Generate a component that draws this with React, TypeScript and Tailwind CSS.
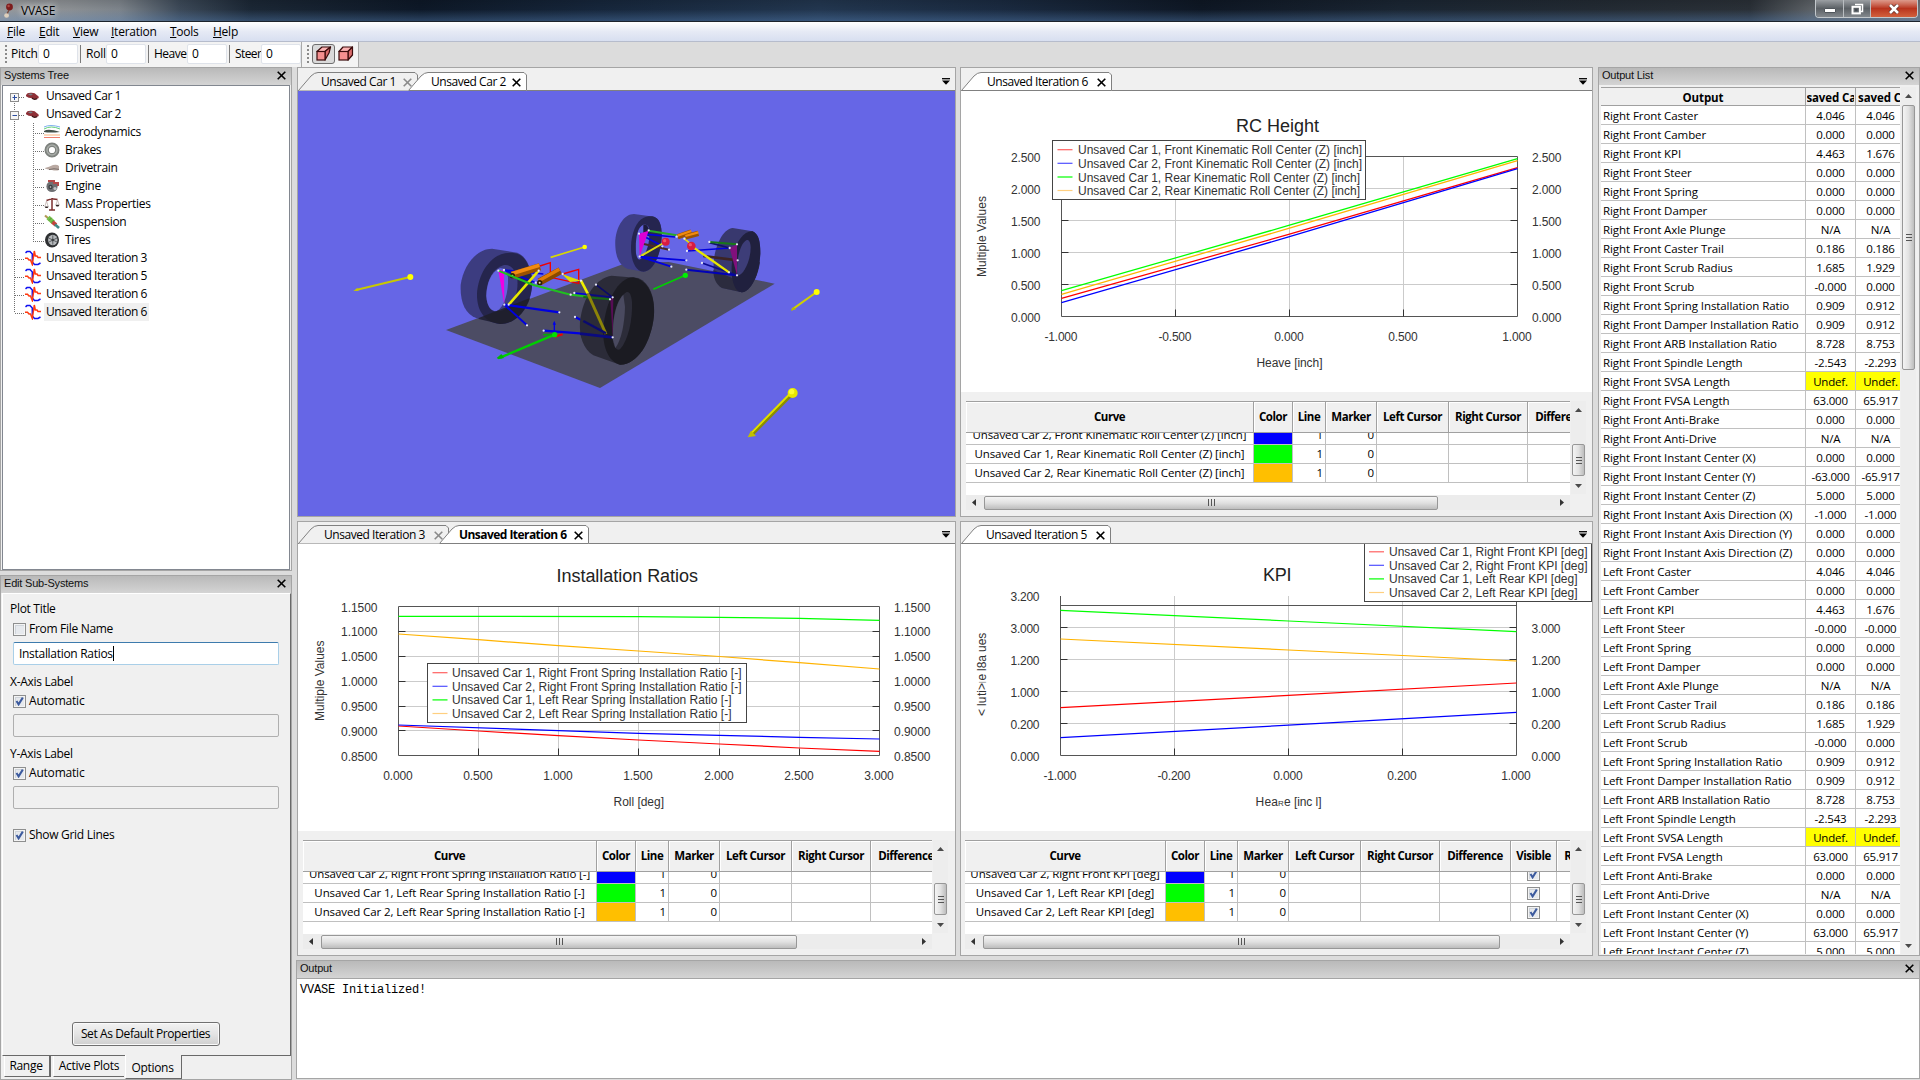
import React from "react";

const UI = "font-['Open_Sans','Noto_Sans',sans-serif] text-[11.5px] tracking-[-0.2px]";

function CloseX({ color = "#000", className = "" }: { color?: string; className?: string }) {
  return (
    <svg width="9" height="9" viewBox="0 0 9 9" className={"shrink-0 " + className}>
      <path d="M0.7 0.7 L8.3 8.3 M8.3 0.7 L0.7 8.3" stroke={color} strokeWidth="1.6" fill="none" />
    </svg>
  );
}

function Caption({ title, close = true }: { title: string; close?: boolean }) {
  return (
    <div className="flex h-[17px] shrink-0 items-center justify-between bg-gradient-to-b from-[#b9b9b9] to-[#d4d4d4] pb-[2px] pl-[3px] pr-[5px] font-['Liberation_Sans',sans-serif] text-[11px] text-[#111]">
      <span>{title}</span>
      {close && <CloseX />}
    </div>
  );
}

/* ---------- title bar, menu, toolbar ---------- */

function TitleBar() {
  return (
    <div className="flex h-[22px] shrink-0 justify-between overflow-hidden border-b border-[#1c232c] bg-[linear-gradient(180deg,rgba(0,0,0,0.12),rgba(255,255,255,0)_45%,rgba(90,135,190,0.38)),linear-gradient(90deg,#97999b_0px,#8b8f93_70px,#7c838a_120px,#3c4958_180px,#1b2735_250px,#0d1827_420px,#16263b_600px,#22364f_820px,#1a2a40_1000px,#0e1724_1200px,#1a2532_1400px,#222a33_1590px,#2a3037_1750px,#5c6166_1812px,#6b7075_1920px)]">
      <div className="flex items-center">
        <svg width="16" height="20" viewBox="0 0 16 20" className="ml-[2px]">
          <circle cx="7.5" cy="6" r="3.4" fill="#7d1c1c" />
          <circle cx="6.6" cy="5" r="1.2" fill="#b04a44" />
          <path d="M7 9 L5 13" stroke="#7b4a3c" strokeWidth="1.4" />
          <ellipse cx="4.6" cy="14.5" rx="2.4" ry="2.2" fill="#ddd0bd" />
        </svg>
        <span className="ml-[3px] font-['Open_Sans',sans-serif] text-[12px] tracking-[-0.2px] text-black [text-shadow:0_0_6px_#fff,0_0_8px_#ffffff90]">VVASE</span>
      </div>
      <div className="mr-[2px] flex h-[18px] overflow-hidden rounded-b-[4px] border border-t-0 border-[#c3c8cc]">
        <div className="flex w-[28px] items-center justify-center border-r border-[#b9bdc1] bg-gradient-to-b from-[#9b9fa3] via-[#5b6065] to-[#83888d]">
          <div className="mt-[3px] h-[5px] w-[12px] rounded-[1px] border border-[#50565c] bg-white" />
        </div>
        <div className="flex w-[27px] items-center justify-center border-r border-[#b9bdc1] bg-gradient-to-b from-[#9b9fa3] via-[#5b6065] to-[#83888d]">
          <svg width="13" height="12" viewBox="0 0 13 12">
            <path d="M4 1.5 h7.5 v7 h-2" fill="none" stroke="#fff" strokeWidth="1.5" />
            <rect x="1.5" y="3.8" width="7.4" height="6.6" fill="none" stroke="#fff" strokeWidth="2" />
            <rect x="3.9" y="6" width="2.6" height="2.2" fill="#444b52" />
          </svg>
        </div>
        <div className="flex w-[46px] items-center justify-center bg-gradient-to-b from-[#dc9a8c] via-[#b8331d] to-[#d2603c]">
          <svg width="12" height="10" viewBox="0 0 12 10">
            <path d="M2 1 L10 9 M10 1 L2 9" stroke="#5b2a24" strokeWidth="4" />
            <path d="M2 1 L10 9 M10 1 L2 9" stroke="#fff" strokeWidth="2.6" />
          </svg>
        </div>
      </div>
    </div>
  );
}

const menus = [
  { t: "File", w: "w-[32px]" },
  { t: "Edit", w: "w-[34px]" },
  { t: "View", w: "w-[38px]" },
  { t: "Iteration", w: "w-[59px]" },
  { t: "Tools", w: "w-[43px]" },
  { t: "Help", w: "w-[40px]" },
];

function MenuBar() {
  return (
    <div className="flex h-[20px] shrink-0 items-center border-b border-[#b6bccc] bg-gradient-to-b from-white via-[#e6eaf5] to-[#d8dff0] pl-[7px] text-[12px] tracking-[-0.25px]">
      {menus.map((m) => (
        <span key={m.t} className={m.w}>
          <u className="underline-offset-1">{m.t[0]}</u>
          {m.t.slice(1)}
        </span>
      ))}
    </div>
  );
}

function Grip() {
  return (
    <div className="flex w-[11px] shrink-0 flex-col items-center justify-center gap-[2px]">
      {[0, 1, 2, 3, 4].map((i) => (
        <div key={i} className="h-[2px] w-[2px] bg-[#8a8a8a]" />
      ))}
    </div>
  );
}

function Cube({ skew = false }: { skew?: boolean }) {
  return (
    <svg width="16" height="15" viewBox="0 0 16 15">
      {skew ? (
        <>
          <path d="M1 5.5 L6 1 L14.5 1 L9 5.5 Z" fill="#fbb3b3" stroke="#3a0b0b" strokeWidth="1.2" strokeLinejoin="round" />
          <path d="M9 5.5 L14.5 1 L13 7 L9 14 Z" fill="#d96b6b" stroke="#3a0b0b" strokeWidth="1.2" strokeLinejoin="round" />
        </>
      ) : (
        <>
          <path d="M1 5.5 L5 1 L14.5 1 L10 5.5 Z" fill="#fbb3b3" stroke="#3a0b0b" strokeWidth="1.2" strokeLinejoin="round" />
          <path d="M10 5.5 L14.5 1 L14.5 9 L10 14 Z" fill="#d96b6b" stroke="#3a0b0b" strokeWidth="1.2" strokeLinejoin="round" />
        </>
      )}
      <rect x="1" y="5.5" width={skew ? 8 : 9} height="8.5" fill="#f58f8f" stroke="#3a0b0b" strokeWidth="1.2" />
    </svg>
  );
}

const fields = [
  { t: "Pitch", w: "w-[27px]" },
  { t: "Roll", w: "w-[20px]" },
  { t: "Heave", w: "w-[33px] tracking-[-0.5px]" },
  { t: "Steer", w: "w-[26px] tracking-[-0.6px]" },
];

function ToolBar() {
  return (
    <div className="flex h-[25px] shrink-0 bg-[#dcdcdc]">
      <div className="flex w-[302px] items-center border-r border-[#a9a9a9] bg-[#f3f3f3] pb-[2px]">
        <Grip />
        {fields.map((f, i) => (
          <React.Fragment key={f.t}>
            {i > 0 && <div className="ml-[2px] mr-[5px] h-[18px] w-px bg-[#7a7a7a]" />}
            <span className={"shrink-0 whitespace-nowrap text-[12px] " + f.w}>{f.t}</span>
            <span className="flex h-[20px] w-[40px] shrink-0 items-center rounded-[2px] border border-[#dfe3ea] bg-white pl-[4px] text-[12px]">0</span>
          </React.Fragment>
        ))}
      </div>
      <div className="flex w-[57px] items-center border-r border-[#a9a9a9] bg-[#f3f3f3] pb-[2px]">
        <Grip />
        <div className="-ml-px flex h-[20px] w-[23px] items-center justify-center rounded-[3px] border border-[#6f6f6f] bg-[#dadada]">
          <Cube skew />
        </div>
        <div className="ml-[3px]">
          <Cube />
        </div>
      </div>
    </div>
  );
}

/* ---------- systems tree ---------- */

const icons: Record<string, React.ReactNode> = {
  car: (
    <>
      <path d="M1 7 Q2 4.6 6 4.8 Q10 4.6 12 7.2 Q14 8 13.8 10 Q11 11.8 7.5 10.2 Q3 10 1 8.2 Z" fill="#8e2f36" />
      <path d="M3 6.4 Q5 5 8 6 L6 7.6 Z" fill="#777f86" />
      <path d="M7 10 Q9 12 12 10.6" stroke="#3b1114" strokeWidth="1.4" fill="none" />
    </>
  ),
  Aerodynamics: (
    <>
      <path d="M0 3 Q6 0 16 3" stroke="#7fb0ee" fill="none" />
      <path d="M0 5 Q7 1 16 5" stroke="#63cf7c" fill="none" />
      <path d="M0 7 Q4 4 16 8 Q6 9 0 8 Z" fill="#44504a" />
      <path d="M0 11 H16" stroke="#f7b27a" />
      <path d="M0 13.5 H16" stroke="#ee7c6c" />
    </>
  ),
  Brakes: (
    <>
      <circle cx="8" cy="8" r="5.3" fill="none" stroke="#7d817d" strokeWidth="4.4" />
      <circle cx="8" cy="8" r="5" fill="none" stroke="#a8aca8" strokeWidth="1.5" />
    </>
  ),
  Drivetrain: (
    <>
      <path d="M1 8 Q5 7 9 5 Q13 4 15 6 V10 Q12 11 8 10 Q4 10 1 8.6 Z" fill="#b9a9a2" />
      <path d="M5 9.6 Q10 8 15 9.4" stroke="#7a6f6b" fill="none" />
    </>
  ),
  Engine: (
    <>
      <circle cx="8" cy="8.5" r="5.6" fill="#6e7073" />
      <path d="M4 3 H10 V5 H14 V8" stroke="#b44a4a" strokeWidth="2" fill="none" />
      <circle cx="6.5" cy="9" r="2.2" fill="#3d4043" />
      <circle cx="11" cy="10.5" r="1.6" fill="#c2c4c6" />
      <circle cx="6.5" cy="9" r="0.8" fill="#d5d5d5" />
    </>
  ),
  "Mass Properties": (
    <>
      <path d="M8 2 V13.5 M2.5 4.5 Q8 2 13.5 3.5 M5 14 H11" stroke="#7c2f2f" strokeWidth="1.5" fill="none" />
      <path d="M2.5 5 L1 10 M2.5 5 L4 10 M13.5 4 L12 8.5 M13.5 4 L15 8.5" stroke="#b7a6a2" strokeWidth="0.7" />
      <path d="M0.5 10.5 H4.8 L3.5 12 H1.6 Z M11.4 8.7 H15.6 L14.4 10.4 H12.5 Z" fill="#332424" />
    </>
  ),
  Suspension: (
    <>
      <path d="M1 1.5 L4.5 4.5" stroke="#b09a55" strokeWidth="2.2" />
      <path d="M4 3.5 L9.5 8.5" stroke="#76c24a" strokeWidth="4.4" />
      <path d="M8.5 8 L12 11" stroke="#c4433c" strokeWidth="3.8" />
      <path d="M11 10.5 L15 14" stroke="#3f8a86" strokeWidth="2.6" />
      <path d="M5 6.5 L7.6 3.8 M7.2 8.6 L9.6 6" stroke="#4d8430" strokeWidth="0.8" />
    </>
  ),
  Tires: (
    <>
      <ellipse cx="8" cy="8" rx="7" ry="7.4" fill="#2e3032" />
      <ellipse cx="8.8" cy="8" rx="4.7" ry="5.2" fill="#b5b8bb" />
      <path d="M8.8 3.4 V12.6 M4.6 6 L13 10 M4.6 10.2 L13 6" stroke="#53575a" strokeWidth="0.9" />
      <circle cx="8.8" cy="8" r="1.2" fill="#3b3e40" />
    </>
  ),
  iteration: (
    <>
      <path d="M0.5 2.8 L2 1.6 H5 L7.3 4 V12 L9.5 14.4 H13 L15.5 13" stroke="#1010f0" strokeWidth="1.5" fill="none" />
      <path d="M0 8.2 H2.5 L4 10 H5.5 L7.3 14.5 L9.3 1 L10.3 6 H12 L13 7.5 H16" stroke="#ff3a10" strokeWidth="1.5" fill="none" />
    </>
  ),
};

function Icon({ name }: { name: string }) {
  return (
    <svg width="16" height="16" viewBox="0 0 16 16" className="shrink-0">
      {icons[name]}
    </svg>
  );
}

type Node = { label: string; icon: string; depth: 0 | 1; box?: "+" | "-"; first?: boolean; last?: boolean; sel?: boolean };

const tree: Node[] = [
  { label: "Unsaved Car 1", icon: "car", depth: 0, box: "+", first: true },
  { label: "Unsaved Car 2", icon: "car", depth: 0, box: "-" },
  ...["Aerodynamics", "Brakes", "Drivetrain", "Engine", "Mass Properties", "Suspension", "Tires"].map(
    (l): Node => ({ label: l, icon: l, depth: 1, last: l === "Tires" }),
  ),
  { label: "Unsaved Iteration 3", icon: "iteration", depth: 0 },
  { label: "Unsaved Iteration 5", icon: "iteration", depth: 0 },
  { label: "Unsaved Iteration 6", icon: "iteration", depth: 0 },
  { label: "Unsaved Iteration 6", icon: "iteration", depth: 0, last: true, sel: true },
];

function TreeRow({ n }: { n: Node }) {
  const w = n.depth ? 41 : 22;
  const dash = { stroke: "#6f6f6f", strokeWidth: 1, strokeDasharray: "1 1" };
  return (
    <div className="flex h-[18px] items-center">
      <svg width={w} height="18" viewBox={`1 0 ${w} 18`} className="shrink-0">
        {n.depth === 1 ? (
          <>
            <path d="M12.5 0 V18" {...dash} />
            <path d={n.last ? "M31.5 0 V10" : "M31.5 0 V18"} {...dash} />
            <path d="M31 10.5 H42" {...dash} />
          </>
        ) : (
          <>
            <path d={n.first ? "M12.5 10 V18" : n.last ? "M12.5 0 V10" : "M12.5 0 V18"} {...dash} />
            <path d="M13 10.5 H23" {...dash} />
          </>
        )}
        {n.box && (
          <>
            <rect x="8.5" y="6.5" width="8" height="8" fill="#f6f6f6" stroke="#8c8c8c" />
            <path d={n.box === "+" ? "M10.5 10.5 H15 M12.5 8 V13" : "M10.5 10.5 H15"} stroke="#2b4da0" />
          </>
        )}
      </svg>
      <Icon name={n.icon} />
      <span
        className={
          "ml-[3px] flex h-[18px] items-center whitespace-nowrap pl-[2px] pr-[2px] text-[12px] " +
          (n.depth ? "tracking-[-0.3px] " : "tracking-[-0.45px] ") +
          (n.sel ? "bg-[#f0f0f0]" : "")
        }
      >
        {n.label}
      </span>
    </div>
  );
}

function SystemsTree() {
  return (
    <div className="flex h-[504px] flex-col border border-[#a5a5a5] bg-[#f0f0f0]">
      <Caption title="Systems Tree" />
      <div className="mx-px flex-1 border border-[#828790] bg-white pt-[1px]">
        {tree.map((n, i) => (
          <TreeRow key={i} n={n} />
        ))}
      </div>
    </div>
  );
}

/* ---------- edit panel ---------- */

function Check({ on }: { on: boolean }) {
  return (
    <span className="flex h-[13px] w-[13px] shrink-0 items-center justify-center border border-[#8e8f8f] bg-[#f4f4f4]">
      <svg width="9" height="9" viewBox="0 0 9 9">
        <rect width="9" height="9" fill="#cfd4da" />
        <rect x="1" y="1" width="8" height="8" fill="#e6e9ed" />
        {on && <path d="M1.5 4 L3.6 7.4 L7.8 0.6" stroke="#3c5a9e" strokeWidth="2" fill="none" />}
      </svg>
    </span>
  );
}

function EditPanel() {
  return (
    <div className="flex h-[505px] flex-col border border-[#a5a5a5] bg-[#f0f0f0]">
      <Caption title="Edit Sub-Systems" />
      <div className="ml-px flex flex-1 flex-col border-b border-l border-r border-t border-b-[#696969] border-l-white border-r-[#696969] border-t-white px-[7px] pt-[6px] text-[12px] tracking-[-0.3px]">
        <span className="h-[18px] leading-[18px]">Plot Title</span>
        <div className="ml-[3px] mt-[2px] flex h-[18px] items-center gap-[3px]"><Check on={false} />From File Name</div>
        <div className="ml-[3px] mt-[4px] flex h-[23px] w-[266px] items-center rounded-[2px] border border-[#a9cfe8] border-t-[#3d7bad] bg-white pl-[5px]">
          Installation Ratios<span className="h-[15px] w-px bg-black" />
        </div>
        <span className="mt-[8px] h-[18px] leading-[18px]">X-Axis Label</span>
        <div className="ml-[3px] mt-[1px] flex h-[18px] items-center gap-[3px] tracking-[-0.2px]"><Check on />Automatic</div>
        <div className="ml-[3px] mt-[4px] h-[23px] w-[266px] rounded-[2px] border border-[#afafaf]" />
        <span className="mt-[8px] h-[18px] leading-[18px]">Y-Axis Label</span>
        <div className="ml-[3px] mt-[1px] flex h-[18px] items-center gap-[3px] tracking-[-0.2px]"><Check on />Automatic</div>
        <div className="ml-[3px] mt-[4px] h-[23px] w-[266px] rounded-[2px] border border-[#afafaf]" />
        <div className="ml-[3px] mt-[17px] flex h-[18px] items-center gap-[3px]"><Check on />Show Grid Lines</div>
        <div className="mb-[9px] mr-[2px] mt-auto flex h-[24px] w-[148px] items-center justify-center self-center rounded-[3px] border border-[#707070] bg-gradient-to-b from-[#f2f2f2] via-[#e4e4e4] to-[#cfcfcf] tracking-[-0.4px] shadow-[inset_0_0_0_1px_#fafafa]">
          Set As Default Properties
        </div>
      </div>
      <div className="flex h-[23px] shrink-0 items-start pl-[3px] text-[12px] tracking-[-0.3px]">
        <div className="flex h-[21px] w-[47px] items-center justify-center border-b border-l border-r-2 border-b-[#696969] border-l-white border-r-[#696969] pr-[2px]">Range</div>
        <div className="ml-[2px] flex h-[21px] w-[71px] items-center justify-center border-b border-l border-b-[#696969] border-l-white">Active Plots</div>
        <div className="-mt-px ml-px flex h-[24px] w-[57px] items-center justify-center border-b border-l border-r border-b-[#696969] border-l-white border-r-[#696969] bg-[#f0f0f0] pr-[2px] pt-[3px]">Options</div>
      </div>
    </div>
  );
}

/* ---------- document panes ---------- */

type TabDef = { label: string; w: number; cls: string; pad: string; active?: boolean; bold?: boolean };

function TabStrip({ tabs, cls }: { tabs: TabDef[]; cls: string }) {
  return (
    <div className={"relative flex shrink-0 items-end justify-between border-b border-[#808080] bg-[#f0f0f0] " + cls}>
      <div className="flex">
        {tabs.map((t) => (
          <div key={t.label} className={"relative flex h-[18px] items-center justify-between whitespace-nowrap pr-[6px] pt-[2px] " + t.cls + " " + t.pad}>
            <svg width={t.w} height="19" viewBox={`0 0 ${t.w} 19`} className="absolute left-0 top-0">
              <path
                d={`M0.5 18.5 L13 4 Q16.5 0.5 20 0.5 H${t.w - 3} L${t.w - 0.5} 3 V18.5`}
                fill={t.active ? "#fff" : "#f0f0f0"}
                stroke="#808080"
              />
              {t.active && <path d={`M1 18.5 H${t.w - 1}`} stroke="#808080" />}
            </svg>
            <span className={"relative text-[12px] " + (t.bold ? "font-bold tracking-[-0.55px]" : "tracking-[-0.45px]")}>{t.label}</span>
            <CloseX color={t.active ? "#000" : "#8a8a8a"} className="relative" />
          </div>
        ))}
      </div>
      <svg width="8" height="7" viewBox="0 0 8 7" className="mb-[5px] mr-[5px]">
        <path d="M0 0.7 H8" stroke="#000" strokeWidth="1.3" />
        <path d="M0 2.5 H8 L4 6.8 Z" fill="#000" />
      </svg>
    </div>
  );
}

function Pane({ tabs, strip, children }: { tabs: TabDef[]; strip: string; children: React.ReactNode }) {
  return (
    <div className="flex flex-col border border-[#a5a5a5] bg-[#f0f0f0]">
      <TabStrip tabs={tabs} cls={strip} />
      {children}
    </div>
  );
}

function VBar({ cls, top, len }: { cls: string; top: string; len: string }) {
  return (
    <div className={"flex w-[15px] shrink-0 flex-col items-center bg-[#ededed] " + cls}>
      <svg width="7" height="4" viewBox="0 0 7 4" className="mt-[7px]"><path d="M0 4 L3.5 0 L7 4 Z" fill="#4a4a4a" /></svg>
      <div className={"flex w-[13px] flex-col items-center justify-center gap-[2px] rounded-[2px] border border-[#979797] bg-gradient-to-r from-[#f4f4f4] via-[#e2e2e2] to-[#bdbdbd] " + top + " " + len}>
        {[0, 1, 2].map((i) => (<div key={i} className="h-px w-[6px] bg-[#555]" />))}
      </div>
      <svg width="7" height="4" viewBox="0 0 7 4" className="mb-[6px] mt-auto"><path d="M0 0 L3.5 4 L7 0 Z" fill="#4a4a4a" /></svg>
    </div>
  );
}

function CurveGrid({ cols, clip, rows, heads, thumb, visible, indent }: {
  cols: string; clip: string; rows: string[]; heads: string[]; thumb: string; visible?: boolean; indent: string;
}) {
  const colors = ["bg-[#0000ff]", "bg-[#00ff00]", "bg-[#ffbf00]"];
  return (
    <div className={"flex pt-[9px] " + indent}>
      <div className={"flex shrink-0 flex-col overflow-hidden " + clip}>
        <div className="h-[94px] overflow-hidden bg-white">
          <div className={"grid h-[32px] border-b border-t border-[#a0a0a0] bg-[#f0f0f0] font-bold tracking-[-0.45px] " + cols}>
            {heads.map((h) => (
              <div key={h} className="flex items-center justify-center whitespace-nowrap border-r border-[#a0a0a0] shadow-[inset_1px_1px_0_#fff]">{h}</div>
            ))}
          </div>
          {rows.map((r, i) => (
            <div key={r} className={"flex flex-col justify-end overflow-hidden " + (i ? "h-[19px]" : "h-[12px]")}>
              <div className={"grid h-[19px] shrink-0 " + cols}>
                {heads.map((h, j) => (
                  <div
                    key={h}
                    className={
                      "flex items-center overflow-hidden whitespace-nowrap border-b border-r border-[#c0c0c0] tracking-[-0.1px] " +
                      (j === 1 ? colors[i] : j === 2 || j === 3 ? "justify-end pr-[2px]" : "justify-center")
                    }
                  >
                    {j === 0 ? r : j === 2 ? "1" : j === 3 ? "0" : visible && j === 7 ? <Check on /> : null}
                  </div>
                ))}
              </div>
            </div>
          ))}
        </div>
        <div className="flex h-[15px] items-center bg-[#ececec]">
          <svg width="4" height="7" viewBox="0 0 4 7" className="ml-[6px]"><path d="M4 0 L0 3.5 L4 7 Z" fill="#333" /></svg>
          <div className={"ml-[8px] flex h-[14px] items-center justify-center gap-[2px] rounded-[2px] border border-[#979797] bg-gradient-to-b from-[#f4f4f4] via-[#e0e0e0] to-[#bdbdbd] " + thumb}>
            {[0, 1, 2].map((i) => (<div key={i} className="h-[7px] w-px bg-[#555]" />))}
          </div>
          <svg width="4" height="7" viewBox="0 0 4 7" className="ml-auto mr-[6px]"><path d="M0 0 L4 3.5 L0 7 Z" fill="#333" /></svg>
        </div>
      </div>
      <VBar cls="ml-[1px] h-[93px]" top="mt-[32px]" len="h-[32px]" />
    </div>
  );
}

/* ---------- charts ---------- */

type Series = { color: string; pts: [number, number][] };
type LegendItem = { t: string; color: string; y: number; len: number };
type Label = { t: string; y: number };

type ChartProps = {
  view: string; w: number; h: number;
  title: { t: string; x: number; y: number; len: number };
  box: { l: number; r: number; t: number; b: number; over?: number };
  xt: { x: number; t: string }[];
  yt: number[];
  left: Label[]; right: Label[]; lx: number; rx: number; lw: number;
  xy: number;
  xl: React.ReactNode; yl: React.ReactNode;
  series: Series[];
  legend: { x: number; y: number; w: number; h: number; lx: number; tx: number; items: LegendItem[] };
};

function Chart(p: ChartProps) {
  const { l, r, t, b } = p.box;
  const top = p.box.over ?? t;
  return (
    <svg width={p.w} height={p.h} viewBox={p.view} className="shrink-0 bg-white font-['Liberation_Sans',sans-serif] text-[12px] tracking-normal" fill="#333">
      <text x={p.title.x} y={p.title.y} textLength={p.title.len} className="text-[18px]" fill="#222">{p.title.t}</text>
      <g stroke="#cbcbcb" fill="none">
        {p.xt.slice(1, -1).map((v) => (<path key={v.x} d={`M${v.x} ${top} V${b}`} />))}
        {p.yt.map((y) => (<path key={y} d={`M${l} ${y} H${r}`} />))}
      </g>
      <g stroke="#333" fill="none">
        <path d={`M${l} ${top} V${b} H${r} V${top} M${l} ${t} H${r}`} stroke="#555" />
        {p.xt.slice(1, -1).map((v) => (<path key={v.x} d={`M${v.x} ${b} v-7`} />))}
        {p.yt.map((y) => (<path key={y} d={`M${l} ${y} h7 M${r} ${y} h-7`} />))}
      </g>
      {p.series.map((s) => (
        <polyline key={s.color} points={s.pts.map((q) => q.join(",")).join(" ")} fill="none" stroke={s.color} strokeWidth="1.25" />
      ))}
      {p.left.map((v) => (<text key={v.y} x={p.lx} y={v.y} textLength={p.lw}>{v.t}</text>))}
      {p.right.map((v) => (<text key={v.y} x={p.rx} y={v.y} textLength={p.lw}>{v.t}</text>))}
      {p.xt.map((v) => {
        const len = v.t[0] === "-" ? 33 : 29.5;
        return <text key={v.x} x={v.x - len / 2 - 0.5} y={p.xy} textLength={len}>{v.t}</text>;
      })}
      {p.xl}
      {p.yl}
      <rect x={p.legend.x} y={p.legend.y} width={p.legend.w} height={p.legend.h} fill="#fff" stroke="#444" />
      {p.legend.items.map((it) => (
        <g key={it.y}>
          <path d={`M${p.legend.lx} ${it.y - 4.5} h15`} stroke={it.color} strokeWidth="1.2" />
          <text x={p.legend.tx} y={it.y} textLength={it.len}>{it.t}</text>
        </g>
      ))}
    </svg>
  );
}

const RED = "#ff0000", BLUE = "#0000ff", GREEN = "#00ff00", ORANGE = "#ffb300";
const L_RED = "#ff6060", L_BLUE = "#5050ff", L_ORANGE = "#ffcf80";

const rcLabels = ["2.500", "2.000", "1.500", "1.000", "0.500", "0.000"].map((t, i) => ({ t, y: 161.7 + i * 32 }));

const rcChart: ChartProps = {
  view: "961 91 631 301", w: 631, h: 301,
  title: { t: "RC Height", x: 1236, y: 132, len: 83 },
  box: { l: 1061.5, r: 1517.5, t: 156.5, b: 316.5 },
  xt: [
    { x: 1061.5, t: "-1.000" }, { x: 1175.5, t: "-0.500" }, { x: 1289.5, t: "0.000" }, { x: 1403.5, t: "0.500" }, { x: 1517.5, t: "1.000" },
  ],
  yt: [188.5, 220.5, 252.5, 284.5],
  left: rcLabels, right: rcLabels, lx: 1011, rx: 1532, lw: 29.5, xy: 341,
  xl: <text x="1256.5" y="367" textLength="66">Heave [inch]</text>,
  yl: <text transform="translate(986 277) rotate(-90)" textLength="81">Multiple Values</text>,
  series: [
    { color: RED, pts: [[1061.5, 298.3], [1289.5, 234.2], [1517.5, 167.7]] },
    { color: BLUE, pts: [[1061.5, 302.7], [1289.5, 236.7], [1517.5, 168.7]] },
    { color: GREEN, pts: [[1061.5, 290.7], [1289.5, 225.2], [1517.5, 158.7]] },
    { color: ORANGE, pts: [[1061.5, 294.3], [1289.5, 228.2], [1517.5, 160.7]] },
  ],
  legend: {
    x: 1052.5, y: 140.5, w: 313, h: 59, lx: 1057.5, tx: 1078,
    items: [
      { t: "Unsaved Car 1, Front Kinematic Roll Center (Z) [inch]", color: L_RED, y: 154.2, len: 284 },
      { t: "Unsaved Car 2, Front Kinematic Roll Center (Z) [inch]", color: L_BLUE, y: 167.8, len: 284 },
      { t: "Unsaved Car 1, Rear Kinematic Roll Center (Z) [inch]", color: GREEN, y: 181.5, len: 282 },
      { t: "Unsaved Car 2, Rear Kinematic Roll Center (Z) [inch]", color: L_ORANGE, y: 195, len: 282 },
    ],
  },
};

const irLabels = ["1.1500", "1.1000", "1.0500", "1.0000", "0.9500", "0.9000", "0.8500"].map((t, i) => ({ t, y: 611.5 + i * 24.85 }));
const irX = [398.5, 478.5, 558.5, 638.5, 719.5, 799.5, 879.5];

const irChart: ChartProps = {
  view: "298 544 657 287", w: 657, h: 287,
  title: { t: "Installation Ratios", x: 556.5, y: 582, len: 141.5 },
  box: { l: 398.5, r: 879.5, t: 606.5, b: 755.5 },
  xt: irX.map((x, i) => ({ x, t: (i * 0.5).toFixed(3) })),
  yt: [631.5, 656.5, 681.5, 706.5, 730.5],
  left: irLabels, right: irLabels, lx: 341, rx: 894, lw: 36.5, xy: 780,
  xl: <text x="613.5" y="806" textLength="50.5">Roll [deg]</text>,
  yl: <text transform="translate(323.5 721) rotate(-90)" textLength="80.5">Multiple Values</text>,
  series: [
    { color: RED, pts: [[398.5, 726], [478.5, 731], [558.5, 735.7], [638.5, 740], [719.5, 744], [799.5, 748], [879.5, 751.3]] },
    { color: BLUE, pts: [[398.5, 725], [558.5, 730.7], [638.5, 733.3], [719.5, 735.3], [799.5, 737.3], [879.5, 739]] },
    { color: GREEN, pts: [[398.5, 616.3], [638.5, 616.6], [719.5, 617.3], [799.5, 618.3], [879.5, 620.3]] },
    { color: ORANGE, pts: [[398.5, 634], [478.5, 639.7], [558.5, 645.7], [638.5, 651], [719.5, 656.5], [799.5, 662.7], [879.5, 669]] },
  ],
  legend: {
    x: 427.5, y: 663.5, w: 319, h: 59, lx: 432.5, tx: 452,
    items: [
      { t: "Unsaved Car 1, Right Front Spring Installation Ratio [-]", color: L_RED, y: 677.2, len: 289.5 },
      { t: "Unsaved Car 2, Right Front Spring Installation Ratio [-]", color: L_BLUE, y: 690.8, len: 289.5 },
      { t: "Unsaved Car 1, Left Rear Spring Installation Ratio [-]", color: GREEN, y: 704.4, len: 279.5 },
      { t: "Unsaved Car 2, Left Rear Spring Installation Ratio [-]", color: L_ORANGE, y: 718, len: 279.5 },
    ],
  },
};

const kpiLabels = ["3.200", "3.000", "1.200", "1.000", "0.200", "0.000"].map((t, i) => ({ t, y: 600.7 + i * 32 }));

const kpiChart: ChartProps = {
  view: "961 544 631 287", w: 631, h: 287,
  title: { t: "KPI", x: 1263, y: 581, len: 28.5 },
  box: { l: 1060.5, r: 1516.5, t: 605.5, b: 755.5, over: 596 },
  xt: [
    { x: 1060.5, t: "-1.000" }, { x: 1174.5, t: "-0.200" }, { x: 1288.5, t: "0.000" }, { x: 1402.5, t: "0.200" }, { x: 1516.5, t: "1.000" },
  ],
  yt: [627.5, 659.5, 691.5, 723.5],
  left: kpiLabels, right: kpiLabels.slice(1), lx: 1010.5, rx: 1531.5, lw: 29, xy: 780,
  xl: (
    <>
      <text x="1255.5" y="806" textLength="22.5">Hea</text>
      <text x="1278" y="806" className="text-[8px]">R</text>
      <text x="1284" y="806" textLength="37.5">e [inc l]</text>
    </>
  ),
  yl: (
    <g transform="translate(985.5 716) rotate(-90)">
      <text x="0">&lt;</text>
      <text x="10">lu</text>
      <text x="20">ti&gt;</text>
      <text x="32" fill="#aaa">ı</text>
      <text x="35.5">e</text>
      <text x="45">l8a</text>
      <text x="64">ues</text>
    </g>
  ),
  series: [
    { color: RED, pts: [[1060.5, 707.7], [1288.5, 695.4], [1516.5, 683]] },
    { color: BLUE, pts: [[1060.5, 737.7], [1288.5, 725.2], [1516.5, 712.4]] },
    { color: GREEN, pts: [[1060.5, 610.3], [1288.5, 621], [1516.5, 631.7]] },
    { color: ORANGE, pts: [[1060.5, 639], [1288.5, 650], [1516.5, 661]] },
  ],
  legend: {
    x: 1364.5, y: 543.5, w: 227, h: 58, lx: 1369, tx: 1389,
    items: [
      { t: "Unsaved Car 1, Right Front KPI [deg]", color: L_RED, y: 556.3, len: 198.5 },
      { t: "Unsaved Car 2, Right Front KPI [deg]", color: L_BLUE, y: 569.8, len: 198.5 },
      { t: "Unsaved Car 1, Left Rear KPI [deg]", color: GREEN, y: 583.4, len: 188.5 },
      { t: "Unsaved Car 2, Left Rear KPI [deg]", color: L_ORANGE, y: 597, len: 188.5 },
    ],
  },
};

/* ---------- 3D suspension view ---------- */

function Rod({ d, c = "#0000e0", w = 5 }: { d: string; c?: string; w?: number }) {
  return <path d={d} stroke={c} strokeWidth={w} fill="none" />;
}

const joints: [number, number][] = [
  [205, 242], [222, 240], [223, 344], [236, 344], [388, 367], [291, 406], [422, 314], [433, 309], [548, 322], [540, 328],
  [548, 442], [435, 381], [341, 422], [453, 272], [398, 252], [326, 242], [317, 278], [627, 131], [656, 121], [697, 169],
  [717, 179], [629, 200], [769, 211], [724, 230], [771, 183], [769, 239], [816, 219], [838, 156], [921, 163],
  [899, 174], [923, 211], [921, 256], [897, 247], [763, 146], [740, 140], [498, 284],
];

function Scene() {
  return (
    <svg width="657" height="425" viewBox="298 91 657 425" className="shrink-0 bg-[#6666e6]">
      <g transform="translate(430 190) scale(0.33333)">
        <path d="M48 420 L590 218 L716 216 L1034 281 L510 594 Z" fill="#4c4c64" />

        {/* rear left wheel */}
        <path d="M612 72 L672 80 C690 86 696 110 695 140 C693 190 672 245 640 245 L592 236 C566 226 554 195 556 150 C560 105 584 72 612 72 Z" fill="#3e3e86" />
        <path d="M640 84 C650 78 664 78 672 80 C690 86 696 110 695 140 C693 190 672 245 640 245 C616 244 602 210 603 170 C604 130 620 92 640 84 Z" fill="#25254f" />
        <path d="M640 104 C620 112 616 150 618 190 C622 212 630 212 637 202 C655 184 662 140 656 112 C652 104 646 102 640 104 Z" fill="#6262dc" />
        <path d="M640 104 C652 100 660 115 659 140 L640 130 Z" fill="#1c1c3c" />

        {/* rear right wheel */}
        <path d="M908 114 L968 124 C986 132 991 155 991 190 C988 255 962 306 935 307 L876 294 C856 282 849 250 851 215 C856 160 882 116 908 114 Z" fill="#38386e" />
        <path d="M850 240 L920 270 L990 215 C984 262 960 306 935 307 L876 294 C856 282 850 262 850 240 Z" fill="#2b2b3e" />
        <path d="M968 124 C986 132 991 155 991 190 C988 255 962 306 935 307 C914 306 903 270 905 230 C908 170 936 122 968 124 Z" fill="#20203e" />
        <path d="M950 150 C930 160 918 210 922 256 C934 262 962 220 962 172 C961 154 956 148 950 150 Z" fill="#3d3d78" />

        {/* front left wheel */}
        <path d="M186 176 L262 188 C292 200 307 240 306 290 C300 350 262 402 210 402 L140 385 C105 372 90 335 92 285 C100 225 140 176 186 176 Z" fill="#3c3c80" />
        <path d="M225 190 C250 184 280 190 293 222 C307 250 308 270 306 290 C300 350 262 402 210 402 C165 398 140 362 141 312 C145 250 180 198 225 190 Z" fill="#25254d" />
        <path d="M220 226 C190 234 170 270 168 316 C170 352 190 366 215 362 C250 350 266 310 262 268 C256 236 240 222 220 226 Z" fill="#3d3d82" />
        <path d="M210 234 C182 248 170 280 169 318 C171 352 184 364 200 364 C222 352 236 310 234 262 C230 244 222 234 210 234 Z" fill="#6464e0" />
        <path d="M146 384 L300 324 C286 366 255 402 210 402 L146 387 Z" fill="#1e1e26" opacity="0.8" />

        {/* rear links */}
        <Rod d="M656 122 L740 136" c="#28a828" w={6} />
        <Rod d="M627 131 L735 141" /><Rod d="M627 131 L697 168" />
        <Rod d="M632 160 L717 179" c="#4a2828" w={6} />
        <path d="M627 131 L656 122 L629 200 Z" fill="#dc00d4" />
        <Rod d="M629 200 L706 156" c="#dcdc10" w={6} />
        <Rod d="M629 200 L769 211" /><Rod d="M629 200 L724 230" />
        <Rod d="M771 183 L899 174" /><Rod d="M838 158 L899 174" c="#10106a" />
        <Rod d="M838 156 L921 163" c="#187818" w={6} />
        <Rod d="M769 239 L921 256" c="#0000b8" w={6} /><Rod d="M816 219 L921 256" c="#0a0a90" />
        <Rod d="M820 198 L923 211" c="#3c2424" w={8} />
        <path d="M899 174 L921 163 L921 256 Z" fill="#80107c" />
        <Rod d="M763 146 L790 168" c="#dcdc10" w={5} />
        <Rod d="M790 172 L897 247" c="#e8e800" w={7} />
        <path d="M743 140 L784 126 M766 141 L805 130" stroke="#9a5200" strokeWidth="16" />
        <path d="M743 137 L784 123 M766 138 L805 127" stroke="#f08a10" strokeWidth="7" />
        <circle cx="707" cy="155" r="12" fill="#d81c40" /><circle cx="704" cy="152" r="5" fill="#ef5568" />
        <circle cx="784" cy="168" r="13" fill="#d81c40" /><circle cx="781" cy="164" r="5" fill="#ef5568" />

        {/* front links */}
        <Rod d="M222 240 L340 252" /><Rod d="M222 240 L317 278" />
        <Rod d="M326 242 L236 344" c="#e8e800" w={8} />
        <path d="M205 242 L222 240 L223 344 Z" fill="#f000e4" />
        <Rod d="M223 344 L388 367" w={7} /><Rod d="M223 344 L291 406" w={6} />
        <path d="M330 228 L361 218 V262 L446 280 V238 L398 252" stroke="#f00000" strokeWidth="4" fill="none" />
        <path d="M396 252 L453 272 L420 276 Z" fill="#dede00" />
        <path d="M246 256 L330 230" stroke="#9a5200" strokeWidth="22" />
        <path d="M245 251 L328 226" stroke="#f08a10" strokeWidth="11" />
        <path d="M328 276 L391 242" stroke="#8a4a00" strokeWidth="22" />
        <path d="M326 272 L388 238" stroke="#e07c08" strokeWidth="10" />
        <circle cx="247" cy="257" r="8" fill="#2a1c08" /><circle cx="329" cy="278" r="8" fill="#2a1c08" />
        <circle cx="247" cy="257" r="3" fill="#e8e8a0" /><circle cx="329" cy="278" r="3" fill="#e8e8a0" />
        <Rod d="M205 242 L310 285 L422 314 L540 328" c="#20c020" w={6} />
        <Rod d="M433 309 L548 322" />
        <Rod d="M341 422 L450 430" w={7} />
        <Rod d="M435 381 L465 396" w={6} />
        <Rod d="M453 272 L474 312" c="#f0f000" w={8} />

        {/* front right wheel with the links dimmed behind it */}
        <path d="M545 257 L625 264 C660 280 675 320 672 375 C664 460 620 525 570 524 L490 496 C460 476 447 440 450 395 C458 320 500 262 545 257 Z" fill="#2b2b38" />
        <path d="M610 262 C655 270 675 320 672 375 C664 460 620 525 570 524 C535 516 517 470 520 415 C526 335 565 262 610 262 Z" fill="#1b1b22" />
        <path d="M590 306 C560 322 545 380 548 450 C552 474 560 482 570 478 C595 450 608 390 606 335 C603 312 598 304 590 306 Z" fill="#2c2c39" />
        <path d="M580 314 C558 336 546 390 549 450 L556 474 C574 450 584 400 585 350 Z" fill="#4a4a60" />
        <Rod d="M498 284 L548 322" c="#0a0a68" /><Rod d="M470 313 L548 322" c="#0a0a80" />
        <Rod d="M460 321 L540 328" c="#156a15" w={6} />
        <Rod d="M474 312 L528 432" c="#8c8408" w={9} />
        <Rod d="M460 393 L528 430" c="#0a0a70" w={7} />
        <Rod d="M450 431 L548 442" c="#0a0a80" w={8} />
        <path d="M541 328 L550 322 L548 442 Z" fill="#560c54" />

        {/* force arrows */}
        <path d="M373 438 V398" stroke="#0000e8" strokeWidth="4" /><path d="M368 404 L373 392 L378 404 Z" fill="#0000e8" />
        <path d="M373 440 L398 433" stroke="#f00000" strokeWidth="6" />
        <path d="M374 434 L212 502" stroke="#00d000" strokeWidth="7" />
        <path d="M340 434 H380" stroke="#00b000" strokeWidth="5" />
        <path d="M200 504 L214 492 L222 504 L206 508 Z" fill="#00b800" /><circle cx="374" cy="434" r="8" fill="#00e000" />
        <path d="M670 298 L766 256" stroke="#00d000" strokeWidth="5" /><circle cx="766" cy="256" r="8" fill="#00f000" />
        <path d="M362 202 L464 171" stroke="#d8d800" strokeWidth="5" /><circle cx="464" cy="171" r="7" fill="#ffff00" />
        <path d="M-222 300 L-60 261" stroke="#c8c800" strokeWidth="6" />
        <path d="M-230 303 L-218 294 L-214 302 Z" fill="#c8c800" /><circle cx="-59" cy="261" r="9" fill="#ffff00" />
        <path d="M1086 359 L1160 306" stroke="#d0d000" strokeWidth="6" /><path d="M1082 362 L1090 350 L1098 358 Z" fill="#b8b800" />
        <circle cx="1160" cy="306" r="9" fill="#ffff00" />
        <path d="M965 733 L1088 609" stroke="#8c8c00" strokeWidth="12" />
        <path d="M963 730 L1085 606" stroke="#e0e000" strokeWidth="6" />
        <path d="M953 742 L963 722 L978 738 Z" fill="#c0c000" />
        <circle cx="1088" cy="609" r="15" fill="#e8e800" /><circle cx="1085" cy="605" r="8" fill="#ffff30" />
        {joints.map(([x, y], i) => (<circle key={i} cx={x} cy={y} r="3.4" fill="#e4e4f4" />))}
      </g>
    </svg>
  );
}

/* ---------- output list ---------- */

function side(s: string, right: boolean): [string, string, string][] {
  const v: [string, string, string][] = [
    ["Caster", "4.046", "4.046"], ["Camber", "0.000", "0.000"], ["KPI", "4.463", "1.676"],
    ["Steer", right ? "0.000" : "-0.000", right ? "0.000" : "-0.000"], ["Spring", "0.000", "0.000"], ["Damper", "0.000", "0.000"],
    ["Axle Plunge", "N/A", "N/A"], ["Caster Trail", "0.186", "0.186"], ["Scrub Radius", "1.685", "1.929"], ["Scrub", "-0.000", "0.000"],
    ["Spring Installation Ratio", "0.909", "0.912"], ["Damper Installation Ratio", "0.909", "0.912"], ["ARB Installation Ratio", "8.728", "8.753"],
    ["Spindle Length", "-2.543", "-2.293"], ["SVSA Length", "Undef.", "Undef."], ["FVSA Length", "63.000", "65.917"],
    ["Anti-Brake", "0.000", "0.000"], ["Anti-Drive", "N/A", "N/A"], ["Instant Center (X)", "0.000", "0.000"],
    ["Instant Center (Y)", right ? "-63.000" : "63.000", right ? "-65.917" : "65.917"], ["Instant Center (Z)", "5.000", "5.000"],
  ];
  return v.map(([a, b, c]) => [`${s} Front ${a}`, b, c]);
}

const outputs: [string, string, string][] = [
  ...side("Right", true),
  ["Right Front Instant Axis Direction (X)", "-1.000", "-1.000"],
  ["Right Front Instant Axis Direction (Y)", "0.000", "0.000"],
  ["Right Front Instant Axis Direction (Z)", "0.000", "0.000"],
  ...side("Left", false),
];

function OutputList() {
  const cell = "flex items-center justify-center overflow-hidden whitespace-nowrap border-b border-r border-[#c0c0c0] pt-[1px] ";
  return (
    <div className="flex w-[322px] flex-col border border-[#a5a5a5] bg-[#f0f0f0]">
      <Caption title="Output List" />
      <div className="mb-px ml-[2px] mt-[2px] flex h-[867px] overflow-hidden">
        <div className="w-[299px] shrink-0 overflow-hidden bg-white">
          <div className="grid h-[19px] grid-cols-[205px_50px_44px] border-b border-t border-[#a0a0a0] bg-[#f0f0f0] font-bold tracking-[-0.1px]">
            <div className="flex items-center justify-center border-r border-[#a0a0a0] pt-[2px]">Output</div>
            <div className="flex min-w-0 border-r border-[#a0a0a0] px-[1px] pt-[2px]">
              <div className="flex min-w-0 flex-1 items-center justify-center overflow-hidden whitespace-nowrap">Unsaved Car 1</div>
            </div>
            <div className="flex min-w-0 pl-[2px] pt-[2px]">
              <div className="flex min-w-0 flex-1 items-center overflow-hidden whitespace-nowrap">
                <span className="-ml-[16px]">Unsaved Car 2</span>
              </div>
            </div>
          </div>
          {outputs.map(([a, b, c]) => {
            const y = b === "Undef." ? "bg-[#ffff00]" : "";
            return (
              <div key={a} className="grid h-[19px] grid-cols-[205px_50px_50px]">
                <div className="flex items-center whitespace-nowrap border-b border-r border-[#c0c0c0] pl-[2px] pt-[1px] tracking-[-0.08px]">{a}</div>
                <div className={cell + y}>{b}</div>
                <div className={cell + y}>{c}</div>
              </div>
            );
          })}
        </div>
        <VBar cls="ml-[1px] h-[867px]" top="mt-[7px]" len="h-[265px]" />
      </div>
    </div>
  );
}

const baseHeads = ["Curve", "Color", "Line", "Marker", "Left Cursor", "Right Cursor", "Difference"];

export default function App() {
  return (
    <div className={"flex h-[1080px] w-[1920px] flex-col overflow-hidden bg-[#dcdcdc] leading-none text-black " + UI}>
      <TitleBar />
      <MenuBar />
      <ToolBar />
      <div className="flex flex-1">
        <div className="flex w-[292px] flex-col justify-between">
          <SystemsTree />
          <EditPanel />
        </div>
        <div className="ml-[4px] flex flex-1 flex-col">
          <div className="flex h-[889px] justify-between">
            <div className="ml-px grid w-[1296px] grid-cols-[659px_633px] grid-rows-[450px_435px] gap-[4px]">
              <Pane
                strip="h-[23px]"
                tabs={[
                  { label: "Unsaved Car 1", w: 120, cls: "w-[120px]", pad: "pl-[23px]" },
                  { label: "Unsaved Car 2", w: 119, cls: "ml-[-10px] w-[119px]", pad: "pl-[23px]", active: true },
                ]}
              >
                <Scene />
              </Pane>
              <Pane strip="h-[23px]" tabs={[{ label: "Unsaved Iteration 6", w: 151, cls: "w-[151px]", pad: "pl-[26px]", active: true }]}>
                <Chart {...rcChart} />
                <CurveGrid
                  indent="pl-[5px]" clip="w-[604px]" thumb="w-[454px]"
                  cols="grid-cols-[288px_39px_33px_51px_72px_79px_71px]"
                  heads={baseHeads}
                  rows={["Unsaved Car 2, Front Kinematic Roll Center (Z) [inch]", "Unsaved Car 1, Rear Kinematic Roll Center (Z) [inch]", "Unsaved Car 2, Rear Kinematic Roll Center (Z) [inch]"]}
                />
              </Pane>
              <Pane
                strip="h-[22px]"
                tabs={[
                  { label: "Unsaved Iteration 3", w: 151, cls: "w-[151px]", pad: "pl-[26px]" },
                  { label: "Unsaved Iteration 6", w: 150, cls: "ml-[-10px] w-[150px]", pad: "pl-[20px]", active: true, bold: true },
                ]}
              >
                <Chart {...irChart} />
                <CurveGrid
                  indent="pl-[5px]" clip="w-[629px]" thumb="w-[476px]"
                  cols="grid-cols-[294px_39px_33px_51px_72px_79px_71px]"
                  heads={baseHeads}
                  rows={["Unsaved Car 2, Right Front Spring Installation Ratio [-]", "Unsaved Car 1, Left Rear Spring Installation Ratio [-]", "Unsaved Car 2, Left Rear Spring Installation Ratio [-]"]}
                />
              </Pane>
              <Pane strip="h-[22px]" tabs={[{ label: "Unsaved Iteration 5", w: 150, cls: "w-[150px]", pad: "pl-[25px]", active: true }]}>
                <Chart {...kpiChart} />
                <CurveGrid
                  indent="pl-[4px]" clip="w-[605px]" thumb="w-[517px]" visible
                  cols="grid-cols-[201px_39px_33px_51px_72px_79px_71px_46px_68px]"
                  heads={[...baseHeads, "Visible", "Right Axis"]}
                  rows={["Unsaved Car 2, Right Front KPI [deg]", "Unsaved Car 1, Left Rear KPI [deg]", "Unsaved Car 2, Left Rear KPI [deg]"]}
                />
              </Pane>
            </div>
            <OutputList />
          </div>
          <div className="mb-px mt-auto flex h-[119px] flex-col border border-[#a5a5a5] bg-white">
            <Caption title="Output" />
            <div className="border-t border-[#a5a5a5] pl-[3px] pt-[4px] font-['Liberation_Mono',monospace] text-[12px] leading-[14px] tracking-[-0.2px]">VVASE Initialized!</div>
          </div>
        </div>
      </div>
    </div>
  );
}
